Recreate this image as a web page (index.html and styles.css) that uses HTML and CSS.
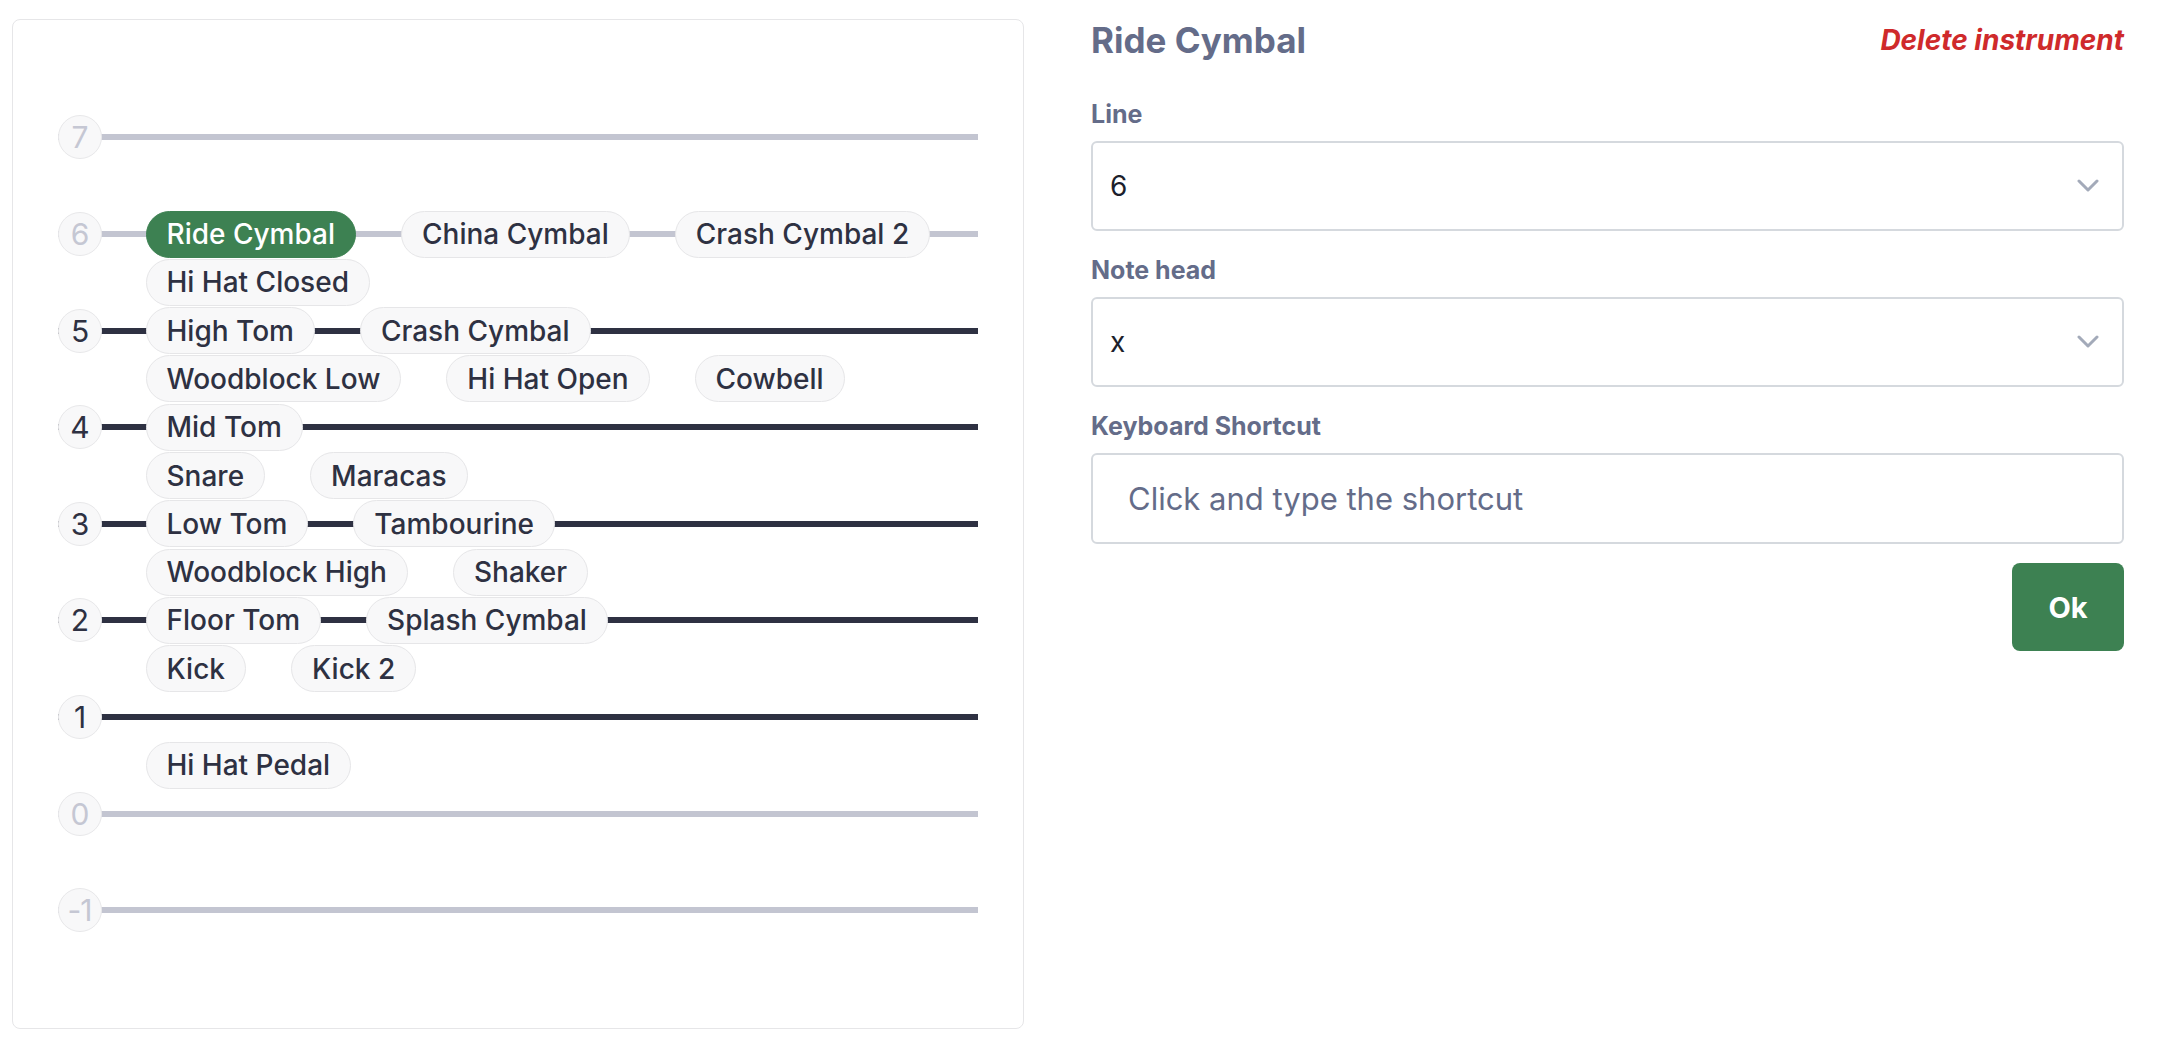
FILE: index.html
```html
<!DOCTYPE html>
<html lang="en">
<head>
<meta charset="utf-8">
<title>Instrument editor</title>
<link rel="stylesheet" href="styles.css">
</head>
<body>
<div class="page">
  <section class="staff-panel">
    <div class="row space"></div>
    <div class="row line light"><span class="num">7</span></div>
    <div class="row space"></div>
    <div class="row line light"><span class="num">6</span><span class="pill selected">Ride Cymbal</span><span class="pill">China Cymbal</span><span class="pill">Crash Cymbal 2</span></div>
    <div class="row space"><span class="pill">Hi Hat Closed</span></div>
    <div class="row line dark"><span class="num">5</span><span class="pill">High Tom</span><span class="pill">Crash Cymbal</span></div>
    <div class="row space"><span class="pill">Woodblock Low</span><span class="pill">Hi Hat Open</span><span class="pill">Cowbell</span></div>
    <div class="row line dark"><span class="num">4</span><span class="pill">Mid Tom</span></div>
    <div class="row space"><span class="pill">Snare</span><span class="pill">Maracas</span></div>
    <div class="row line dark"><span class="num">3</span><span class="pill">Low Tom</span><span class="pill">Tambourine</span></div>
    <div class="row space"><span class="pill">Woodblock High</span><span class="pill">Shaker</span></div>
    <div class="row line dark"><span class="num">2</span><span class="pill">Floor Tom</span><span class="pill">Splash Cymbal</span></div>
    <div class="row space"><span class="pill">Kick</span><span class="pill">Kick 2</span></div>
    <div class="row line dark"><span class="num">1</span></div>
    <div class="row space"><span class="pill">Hi Hat Pedal</span></div>
    <div class="row line light"><span class="num">0</span></div>
    <div class="row space"></div>
    <div class="row line light"><span class="num">-1</span></div>
    <div class="row space"></div>
  </section>

  <section class="editor">
    <div class="editor-head">
      <h2 class="title">Ride Cymbal</h2>
      <span class="delete">Delete instrument</span>
    </div>
    <div class="field">
      <div class="label">Line</div>
      <div class="select"><span class="value">6</span>
        <svg class="chev" width="22" height="14" viewBox="0 0 22 14"><path d="M2 2 L11 11 L20 2" fill="none" stroke="#a3aab9" stroke-width="3" stroke-linecap="round" stroke-linejoin="round"/></svg>
      </div>
    </div>
    <div class="field">
      <div class="label">Note head</div>
      <div class="select"><span class="value">x</span>
        <svg class="chev" width="22" height="14" viewBox="0 0 22 14"><path d="M2 2 L11 11 L20 2" fill="none" stroke="#a3aab9" stroke-width="3" stroke-linecap="round" stroke-linejoin="round"/></svg>
      </div>
    </div>
    <div class="field">
      <div class="label">Keyboard Shortcut</div>
      <div class="input"><span class="placeholder">Click and type the shortcut</span></div>
    </div>
    <div class="actions">
      <button class="ok">Ok</button>
    </div>
  </section>
</div>
</body>
</html>
```

FILE: styles.css
```css
* { box-sizing: border-box; }

html, body {
  margin: 0;
  background: #ffffff;
  font-family: Inter, "Noto Sans", "Liberation Sans", sans-serif;
  color: #2e3142;
}

.page {
  display: flex;
  align-items: flex-start;
  padding: 19px 0 0 12px;
}

/* ---------- staff panel ---------- */
.staff-panel {
  width: 1012px;
  border: 1.5px solid #e6e6e8;
  border-radius: 8px;
  padding: 45px 45px 45px 44.5px;
  display: flex;
  flex-direction: column;
}

.row {
  height: 48.3px;
  display: flex;
  align-items: center;
  gap: 45px;
  flex-shrink: 0;
}

.row.space { padding-left: 88px; }

.row.line.light {
  background: linear-gradient(#c3c5d1, #c3c5d1) center / 100% 6px no-repeat;
}
.row.line.dark {
  background: linear-gradient(#2e3142, #2e3142) center / 100% 6px no-repeat;
}

.num {
  width: 44px;
  height: 44px;
  margin-right: -1px;
  border-radius: 50%;
  border: 1.5px solid #e8e8ea;
  background: #f8f8f9;
  display: flex;
  align-items: center;
  justify-content: center;
  font-size: 30px;
  font-weight: 400;
  flex-shrink: 0;
  letter-spacing: -1px;
}
.light .num { color: #c5c7d3; }
.dark .num { color: #2e3142; }

.pill {
  height: 47px;
  padding: 0 20px;
  border-radius: 24px;
  border: 1.5px solid #e6e6e8;
  background: #f8f8f9;
  display: flex;
  align-items: center;
  font-size: 28px;
  font-weight: 500;
  color: #2e3142;
  white-space: nowrap;
  flex-shrink: 0;
}
.pill.selected {
  background: #3d8152;
  border-color: #3d8152;
  color: #ffffff;
}

/* ---------- editor ---------- */
.editor {
  width: 1033px;
  margin-left: 67px;
  padding-top: 0;
}

.editor-head {
  display: flex;
  justify-content: space-between;
  align-items: flex-start;
  margin-bottom: 37px;
}

.title {
  margin: 0;
  font-size: 35px;
  line-height: 42px;
  font-weight: 700;
  color: #646c89;
}

.delete {
  font-size: 28px;
  line-height: 42px;
  font-weight: 700;
  font-style: italic;
  color: #cf2a2b;
}

.field { margin-bottom: 23px; }

.label {
  font-size: 25px;
  line-height: 32px;
  font-weight: 700;
  color: #646c89;
  margin-bottom: 11px;
}

.select {
  height: 90px;
  border: 2px solid #d5d9de;
  border-radius: 6px;
  padding: 0 23px 0 17px;
  display: flex;
  align-items: center;
  justify-content: space-between;
  background: #ffffff;
}

.value {
  font-size: 28px;
  color: #1c1f2c;
}

.input {
  height: 91px;
  border: 2px solid #d5d9de;
  border-radius: 6px;
  padding: 0 35px;
  display: flex;
  align-items: center;
}

.placeholder {
  font-size: 31px;
  color: #646c89;
}

.actions {
  display: flex;
  justify-content: flex-end;
  margin-top: -4px;
}

.ok {
  width: 112px;
  height: 88px;
  border: none;
  border-radius: 8px;
  background: #3d8152;
  color: #ffffff;
  font-family: inherit;
  font-size: 29px;
  font-weight: 700;
}
```
